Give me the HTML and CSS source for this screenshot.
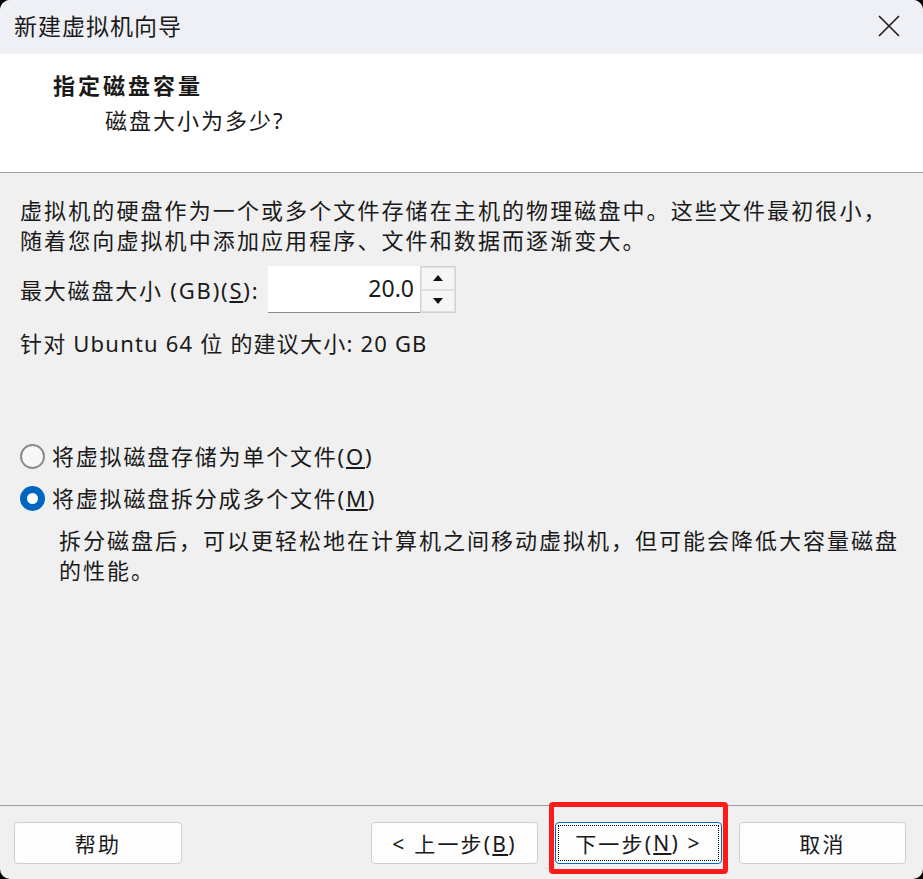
FILE: index.html
```html
<!DOCTYPE html>
<html lang="zh-CN">
<head>
  <meta charset="UTF-8">
  <title>新建虚拟机向导</title>
  <link rel="stylesheet" href="styles.css">
</head>
<body>
  <div class="window">
    <div class="titlebar">
      <span class="title">新建虚拟机向导</span>
      <svg class="close" width="22" height="22" viewBox="0 0 22 22">
        <path d="M1 1 L21 21 M21 1 L1 21" stroke="#1b1b1b" stroke-width="1.6" fill="none"/>
      </svg>
    </div>

    <div class="header">
      <div class="heading">指定磁盘容量</div>
      <div class="subheading">磁盘大小为多少?</div>
    </div>

    <div class="content">
      <p class="intro">虚拟机的硬盘作为一个或多个文件存储在主机的物理磁盘中。这些文件最初很小，<br>随着您向虚拟机中添加应用程序、文件和数据而逐渐变大。</p>

      <div class="size-row">
        <label class="size-label">最大磁盘大小 (GB)(<u>S</u>):</label>
        <div class="spin">
          <div class="spin-value">20.0</div>
          <div class="spin-buttons">
            <div class="spin-btn"><span class="tri up"></span></div>
            <div class="spin-btn"><span class="tri down"></span></div>
          </div>
        </div>
      </div>

      <div class="hint">针对 Ubuntu 64 位 的建议大小: 20 GB</div>

      <div class="options">
        <div class="option">
          <span class="radio"></span>
          <span>将虚拟磁盘存储为单个文件(<u>O</u>)</span>
        </div>
        <div class="option">
          <span class="radio checked"></span>
          <span>将虚拟磁盘拆分成多个文件(<u>M</u>)</span>
        </div>
        <p class="option-desc">拆分磁盘后，可以更轻松地在计算机之间移动虚拟机，但可能会降低大容量磁盘<br>的性能。</p>
      </div>
    </div>

    <div class="footer">
      <button class="btn">帮助</button>
      <div class="nav">
        <button class="btn">&lt; 上一步(<u>B</u>)</button>
        <div class="marked">
          <button class="btn focused"><span class="focus-ring">下一步(<u>N</u>) &gt;</span></button>
          <div class="highlight"></div>
        </div>
        <button class="btn">取消</button>
      </div>
    </div>
  </div>
</body>
</html>
```

FILE: styles.css
```css
html, body {
  margin: 0;
  padding: 0;
  background: #000;
}

body {
  font-family: "Noto Sans", "Noto Sans CJK SC", sans-serif;
  color: #1a1a1a;
}

.window {
  width: 923px;
  height: 879px;
  background: #f0f0f0;
  border-radius: 10px;
  overflow: hidden;
  display: flex;
  flex-direction: column;
}

.titlebar {
  height: 54px;
  background: #eff0f5;
  display: flex;
  align-items: center;
  justify-content: space-between;
  padding: 0 23px 0 14px;
}

.title {
  font-size: 23px;
  letter-spacing: 1px;
  margin-top: -5px;
}

.close {
  margin-top: -2px;
}

.header {
  height: 119px;
  box-sizing: border-box;
  background: #fff;
  border-bottom: 1px solid #a0a0a0;
  padding-top: 16px;
  font-size: 22px;
  letter-spacing: 2px;
  line-height: 30px;
}

.heading {
  font-weight: bold;
  padding-left: 53px;
  letter-spacing: 3px;
}

.subheading {
  padding-left: 105px;
  margin-top: 5px;
}

.content {
  flex: 1;
  padding: 22px 20px 0 20px;
  font-size: 22px;
  line-height: 30px;
  letter-spacing: 1.8px;
}

.intro {
  margin: 0;
  letter-spacing: 2.1px;
}

.size-row {
  display: flex;
  align-items: center;
  margin-top: 11px;
}

.size-label {
  width: 248px;
}

.spin {
  display: flex;
  height: 47px;
  letter-spacing: 0;
}

.spin-value {
  width: 146px;
  background: #fff;
  border-bottom: 1px solid #8c8c8c;
  text-align: right;
  padding-right: 6px;
  font-size: 23px;
  line-height: 44px;
}

.spin-buttons {
  display: flex;
  flex-direction: column;
  border: 1px solid #d4d4d4;
  background: #fff;
}

.spin-btn {
  width: 32px;
  flex: 1;
  background: #f6f6f6;
  border: 1px solid #e0e0e0;
  display: flex;
  align-items: center;
  justify-content: center;
}

.tri {
  width: 0;
  height: 0;
  border-left: 5px solid transparent;
  border-right: 5px solid transparent;
}

.tri.up {
  border-bottom: 6px solid #111;
}

.tri.down {
  border-top: 6px solid #111;
}

.hint {
  margin-top: 15px;
  letter-spacing: 1.2px;
}

.options {
  margin-top: 83px;
}

.option {
  display: flex;
  align-items: center;
  height: 30px;
  margin-bottom: 12px;
  gap: 7px;
}

.radio {
  width: 21px;
  height: 21px;
  border: 2px solid #8a8a8a;
  border-radius: 50%;
  box-sizing: content-box;
  background: #f7f7f7;
}

.radio.checked {
  border: 7px solid #0067c0;
  width: 11px;
  height: 11px;
  background: #fff;
}

.option-desc {
  margin: 0;
  padding-left: 39px;
  letter-spacing: 2px;
}

.footer {
  height: 74px;
  border-top: 1px solid #a0a0a0;
  box-sizing: border-box;
  display: flex;
  justify-content: space-between;
  padding: 16px 17px 0 14px;
}

.nav {
  display: flex;
  gap: 17px;
}

.btn {
  width: 168px;
  height: 42px;
  background: #fdfdfd;
  border: 1px solid #cfcfcf;
  border-radius: 4px;
  font-family: "Noto Sans", "Noto Sans CJK SC", sans-serif;
  font-size: 21px;
  color: #1a1a1a;
  padding: 0;
  letter-spacing: 2.2px;
}

.nav .btn {
  width: 167px;
}

.btn.focused {
  border-color: #0067c0;
  padding: 2px;
}

.focus-ring {
  display: flex;
  align-items: center;
  justify-content: center;
  height: 100%;
  border: 1px dotted #000;
  box-sizing: border-box;
}

.marked {
  position: relative;
}

.highlight {
  position: absolute;
  left: -6px;
  top: -20px;
  width: 179px;
  height: 72px;
  border: 5px solid #ff1a1a;
  border-radius: 4px;
  box-sizing: border-box;
}
```
